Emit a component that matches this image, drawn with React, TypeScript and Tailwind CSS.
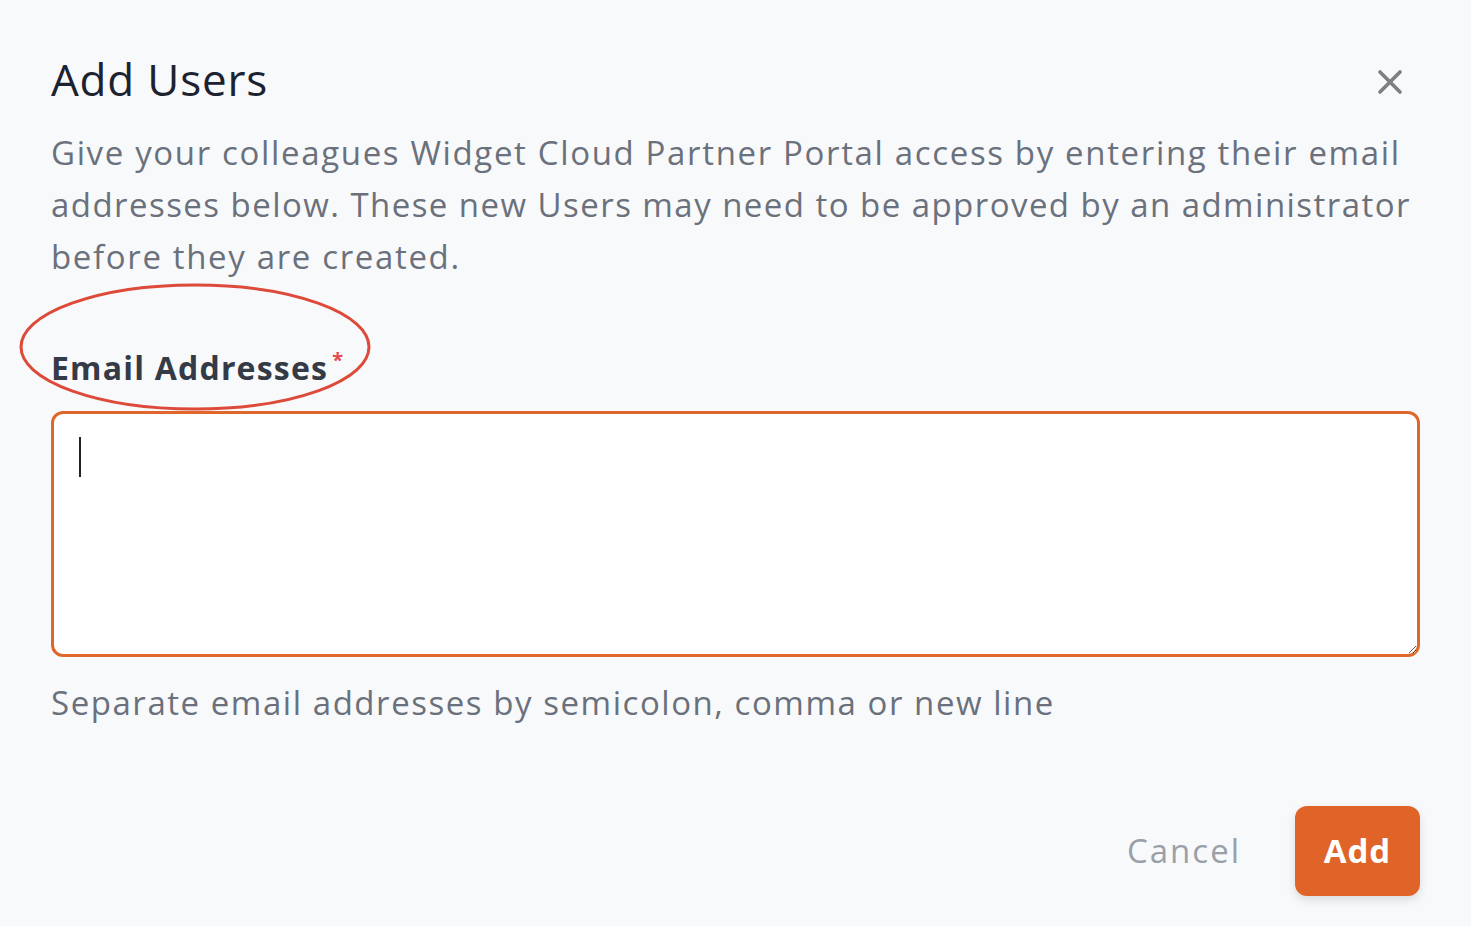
import { X } from "lucide-react";

export default function App() {
  return (
    <div
      className="relative min-h-[926px] w-full bg-[#f8f9fb] px-[51px] pt-[52px]"
      style={{ fontFamily: "'Open Sans', 'Noto Sans', sans-serif" }}
    >
      {/* header */}
      <div className="flex items-start justify-between">
        <h1 className="text-[44px] leading-[54px] font-medium text-[#1c2230] tracking-[0.8px]">Add Users</h1>
        <button className="mt-[10px] mr-[10px] text-[#7d7f84]">
          <X size={40} strokeWidth={2.2} />
        </button>
      </div>

      <p className="mt-[21px] -mr-[40px] whitespace-nowrap text-[33px] leading-[52px] tracking-[1.65px] text-[#6b717c]">
        <span className="block">Give your colleagues Widget Cloud Partner Portal access by entering their email</span>
        <span className="block tracking-[1.45px]">addresses below. These new Users may need to be approved by an administrator</span>
        <span className="block">before they are created.</span>
      </p>

      {/* field */}
      <div className="relative mt-[63px]">
        <label className="flex items-start text-[32px] leading-[44px] font-bold text-[#343a46] tracking-[1.2px]">
          Email Addresses
          <span className="ml-[4px] -mt-[8px] text-[20px] text-[#e5484d]">*</span>
        </label>

        {/* annotation */}
        <svg
          className="pointer-events-none absolute left-[-33px] top-[-64px]"
          width="354"
          height="130"
          viewBox="0 0 354 130"
        >
          <ellipse cx="177" cy="65" rx="174" ry="62" fill="none" stroke="#dd4a3a" strokeWidth="3" />
        </svg>

        <div className="relative mt-[21px]">
          <textarea
            className="block h-[246px] w-full rounded-[12px] border-[3px] border-[#e0672b] bg-white px-[26px] py-[20px] text-[33px] outline-none"
          />
          <div className="pointer-events-none absolute left-[28px] top-[26px] h-[40px] w-[2px] bg-[#222]" />
        </div>

        <p className="mt-[23px] text-[33px] leading-[46px] tracking-[1.55px] text-[#6b717c]">
          Separate email addresses by semicolon, comma or new line
        </p>
      </div>

      {/* footer */}
      <div className="mt-[80px] flex items-center justify-end gap-[54px]">
        <button className="text-[33px] tracking-[2px] text-[#9aa0a8]">Cancel</button>
        <button className="h-[90px] w-[125px] rounded-[12px] bg-[#e06428] text-[33px] font-bold tracking-[1px] text-white shadow-[0_4px_10px_rgba(0,0,0,0.12)]">
          Add
        </button>
      </div>
    </div>
  );
}
